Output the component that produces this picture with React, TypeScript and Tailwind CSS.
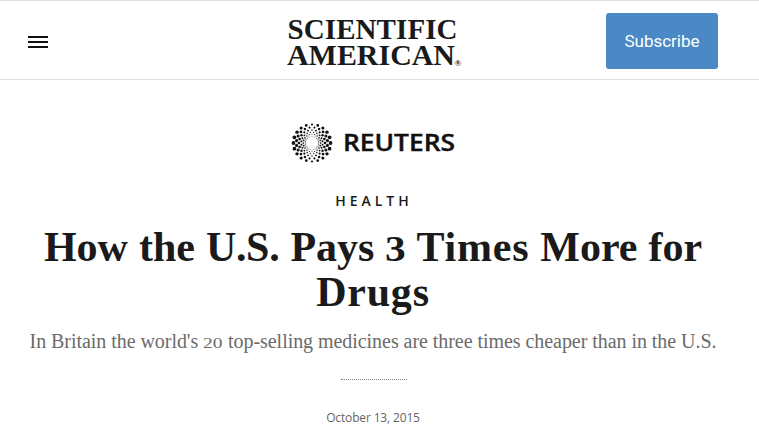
import React from 'react'

const RINGS = [
  { radius: 6.8, dot: 0.5 },
  { radius: 8.7, dot: 0.7 },
  { radius: 10.7, dot: 0.85 },
  { radius: 13, dot: 1.1 },
  { radius: 15.6, dot: 1.3 },
  { radius: 18.5, dot: 1.55 },
]

const DOTS_PER_RING = 20

function ReutersMark() {
  return (
    <svg width="42" height="42" viewBox="-21 -21 42 42" fill="#111111" aria-hidden="true">
      {RINGS.map((ring, i) =>
        Array.from({ length: DOTS_PER_RING }, (_, n) => {
          const angle = ((n + (i % 2 ? 0 : 0.5)) / DOTS_PER_RING) * Math.PI * 2
          // dots swell towards the left and right edges
          const size = ring.dot * (0.72 + 0.5 * Math.abs(Math.cos(angle)))
          return (
            <circle
              key={`${i}-${n}`}
              cx={(Math.cos(angle) * ring.radius).toFixed(2)}
              cy={(Math.sin(angle) * ring.radius).toFixed(2)}
              r={size.toFixed(2)}
            />
          )
        })
      )}
    </svg>
  )
}

function ReutersLogo() {
  return (
    <div className="ml-0.5 flex items-center">
      <ReutersMark />
      <svg width="116" height="34" viewBox="0 0 116 34" className="ml-2" role="img">
        <text
          x="2"
          y="25.3"
          textLength="112"
          lengthAdjust="spacingAndGlyphs"
          fill="#111111"
          className="font-['Open_Sans',sans-serif] text-[23px] font-semibold"
          stroke="#111111"
          strokeWidth="0.4"
        >
          REUTERS
        </text>
      </svg>
    </div>
  )
}

function ScientificAmericanLogo() {
  return (
    <svg width="176" height="64" viewBox="0 0 176 64" fill="#1a1a1a" role="img">
      <g className="font-['Liberation_Serif',serif] text-[29px] font-bold">
        <text x="1.5" y="31" textLength="170" lengthAdjust="spacing">
          SCIENTIFIC
        </text>
        <text x="1" y="57" textLength="168" lengthAdjust="spacingAndGlyphs">
          AMERICAN
        </text>
      </g>
      <text x="168.5" y="57.5" className="font-['Liberation_Serif',serif] text-[9px] font-bold">
        ®
      </text>
    </svg>
  )
}

function Header() {
  return (
    <header className="relative flex h-20 items-center justify-center border-y border-[#e0e0e0]">
      <button type="button" aria-label="Menu" className="absolute left-7 top-[35px] flex w-5 flex-col gap-[3px]">
        <span className="h-0.5 bg-[#111111]" />
        <span className="h-0.5 bg-[#111111]" />
        <span className="h-0.5 bg-[#111111]" />
      </button>
      <div className="mr-[11px]">
        <ScientificAmericanLogo />
      </div>
      <button
        type="button"
        className="absolute right-[41px] top-3 h-14 w-28 rounded-[3px] bg-[#4a89c5] pt-0.5 font-['Roboto',sans-serif] text-[17px] text-white"
      >
        Subscribe
      </button>
    </header>
  )
}

export default function App() {
  return (
    <div className="h-[439px] overflow-hidden bg-white text-[#1a1a1a]">
      <Header />
      <main className="flex w-[746px] flex-col items-center pt-[42px] text-center">
        <ReutersLogo />
        <p className="mt-[27px] pl-0.5 font-['Open_Sans',sans-serif] text-sm font-semibold leading-5 tracking-[4px]">
          HEALTH
        </p>
        <h1 className="mt-3.5 whitespace-nowrap font-['Liberation_Serif',serif] text-[42px] font-bold leading-[45px] [word-spacing:0.5px]">
          How the <span className="tracking-[-0.3px]">U.S.</span> Pays{' '}
          <span className="inline-block w-5 origin-left scale-x-115 text-left text-[36px] leading-none">3</span>{' '}
          <span className="tracking-[0.8px]">Times</span> More for
          <br />
          <span className="tracking-[0.8px]">Drugs</span>
        </h1>
        <p className="mt-3 whitespace-nowrap font-['Liberation_Serif',serif] text-xl leading-7 tracking-[-0.05px] text-[#6b6b6b]">
          In Britain the world's{' '}
          <span className="inline-block w-5 origin-left scale-x-130 text-left text-[15px] leading-none">20</span>{' '}
          top-selling medicines are three times cheaper than in the U.S.
        </p>
        <div className="ml-px mt-6 w-[66px] border-t border-dotted border-[#808080]" />
        <p className="mt-7 font-['Open_Sans',sans-serif] text-xs leading-5 tracking-[-0.15px] text-[#666666]">
          October 13, 2015
        </p>
      </main>
    </div>
  )
}
